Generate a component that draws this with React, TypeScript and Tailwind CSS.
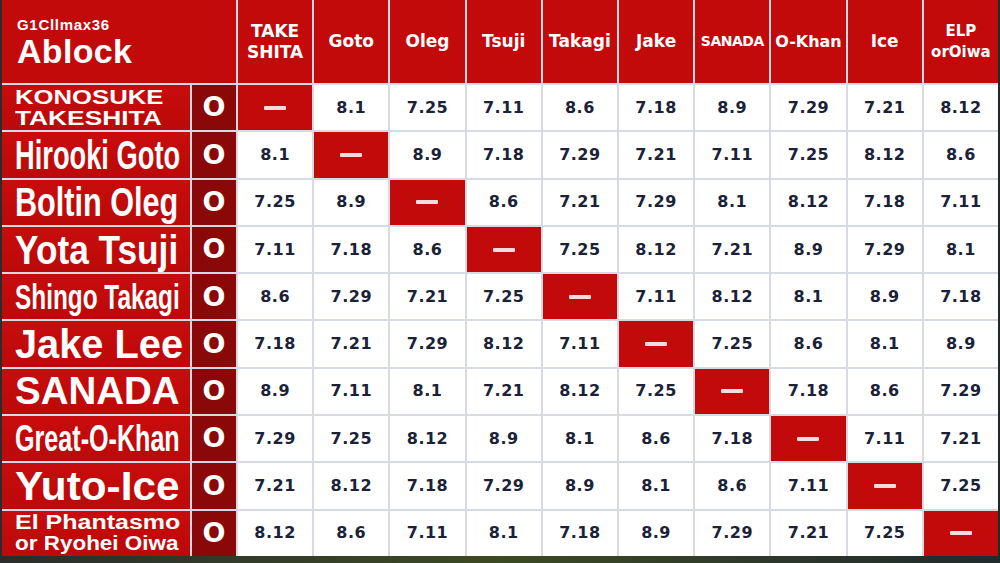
import { useLayoutEffect, useRef, useState } from 'react'

// fila de luchadores: nombre (líneas con ancho objetivo) y tamaño de letra
const players: { lines: [string, number][]; size: string }[] = [
  { lines: [['KONOSUKE', 149], ['TAKESHITA', 146]], size: 'text-[20px] leading-[21px]' },
  { lines: [['Hirooki Goto', 165]], size: 'text-[40px] leading-none' },
  { lines: [['Boltin Oleg', 163]], size: 'text-[40px] leading-none' },
  { lines: [['Yota Tsuji', 163]], size: 'text-[40px] leading-none' },
  { lines: [['Shingo Takagi', 165]], size: 'text-[35px] leading-none' },
  { lines: [['Jake Lee', 168]], size: 'text-[40px] leading-none' },
  { lines: [['SANADA', 165]], size: 'text-[38px] leading-none' },
  { lines: [['Great-O-Khan', 165]], size: 'text-[37px] leading-none' },
  { lines: [['Yuto-Ice', 164]], size: 'text-[41px] leading-none' },
  { lines: [['El Phantasmo', 165], ['or Ryohei Oiwa', 164]], size: 'text-[20px] leading-[21px]' },
]

const headers: { lines: string[]; cls: string }[] = [
  { lines: ['TAKE', 'SHITA'], cls: 'text-[17px] leading-[21px]' },
  { lines: ['Goto'], cls: 'text-[17px]' },
  { lines: ['Oleg'], cls: 'text-[17px]' },
  { lines: ['Tsuji'], cls: 'text-[17px]' },
  { lines: ['Takagi'], cls: 'text-[17px]' },
  { lines: ['Jake'], cls: 'text-[17px]' },
  { lines: ['SANADA'], cls: 'text-[14px] tracking-[-0.5px]' },
  { lines: ['O-Khan'], cls: 'text-[16px]' },
  { lines: ['Ice'], cls: 'text-[17px]' },
  { lines: ['ELP', 'orOiwa'], cls: 'text-[15px] leading-[21px]' },
]

const scores: (string | null)[][] = [
  [null, '8.1', '7.25', '7.11', '8.6', '7.18', '8.9', '7.29', '7.21', '8.12'],
  ['8.1', null, '8.9', '7.18', '7.29', '7.21', '7.11', '7.25', '8.12', '8.6'],
  ['7.25', '8.9', null, '8.6', '7.21', '7.29', '8.1', '8.12', '7.18', '7.11'],
  ['7.11', '7.18', '8.6', null, '7.25', '8.12', '7.21', '8.9', '7.29', '8.1'],
  ['8.6', '7.29', '7.21', '7.25', null, '7.11', '8.12', '8.1', '8.9', '7.18'],
  ['7.18', '7.21', '7.29', '8.12', '7.11', null, '7.25', '8.6', '8.1', '8.9'],
  ['8.9', '7.11', '8.1', '7.21', '8.12', '7.25', null, '7.18', '8.6', '7.29'],
  ['7.29', '7.25', '8.12', '8.9', '8.1', '8.6', '7.18', null, '7.11', '7.21'],
  ['7.21', '8.12', '7.18', '7.29', '8.9', '8.1', '8.6', '7.11', null, '7.25'],
  ['8.12', '8.6', '7.11', '8.1', '7.18', '8.9', '7.29', '7.21', '7.25', null],
]

// estira o comprime una línea hasta el ancho indicado
function FitLine({ text, width }: { text: string; width: number }) {
  const ref = useRef<HTMLSpanElement>(null)
  const [scale, setScale] = useState(1)

  useLayoutEffect(() => {
    const w = ref.current?.offsetWidth
    if (w) setScale(width / w)
  }, [text, width])

  return (
    <span
      ref={ref}
      className="inline-block self-start whitespace-nowrap origin-left"
      style={{ transform: `scaleX(${scale})` }}
    >
      {text}
    </span>
  )
}

export default function App() {
  return (
    <div className="w-[1000px] h-[563px] overflow-hidden bg-linear-to-r from-[#2a2d2c] via-[#3c4a22] to-[#1f2a2c]">
      <div className="ml-[2px] w-[996px] h-[556px] grid grid-cols-[188px_44px_repeat(10,1fr)] grid-rows-[83px_repeat(10,1fr)] gap-[2px] bg-[#d6dae3] font-['DejaVu_Sans',sans-serif]">
        {/* Cabecera */}
        <div className="col-span-2 bg-[#c30a0b] pl-[15px] flex flex-col justify-center text-white font-['Liberation_Sans',sans-serif] font-bold">
          <div className="text-[15px] leading-[18px] tracking-[0.7px]">G1Cllmax36</div>
          <div className="text-[34px] leading-[34px] tracking-[0.3px]">Ablock</div>
        </div>
        {headers.map((h, i) => (
          <div
            key={i}
            className={`bg-[#c30a0b] flex flex-col items-center justify-center text-white font-bold ${h.cls}`}
          >
            {h.lines.map((l) => (
              <span key={l}>{l}</span>
            ))}
          </div>
        ))}

        {/* Filas */}
        {players.map((p, r) => [
          <div
            key={`n${r}`}
            className={`bg-linear-to-b from-[#c80c0c] to-[#bb0909] pl-[13px] flex flex-col justify-center text-white font-bold font-['Liberation_Sans',sans-serif] ${p.size}`}
          >
            {p.lines.map(([t, w]) => (
              <FitLine key={t} text={t} width={w} />
            ))}
          </div>,
          <div
            key={`o${r}`}
            className="bg-[#8a0808] flex items-center justify-center text-white font-bold text-[27px]"
          >
            O
          </div>,
          ...scores[r].map((s, c) =>
            s === null ? (
              <div key={`c${r}-${c}`} className="bg-[#c30a0b] flex items-center justify-center">
                <div className="w-[22px] h-[4px] rounded-[1px] bg-[#f6dcdc]" />
              </div>
            ) : (
              <div
                key={`c${r}-${c}`}
                className="bg-white flex items-center justify-center text-[#1b2237] font-bold text-[16px] tracking-[0.5px]"
              >
                {s}
              </div>
            ),
          ),
        ])}
      </div>
    </div>
  )
}
